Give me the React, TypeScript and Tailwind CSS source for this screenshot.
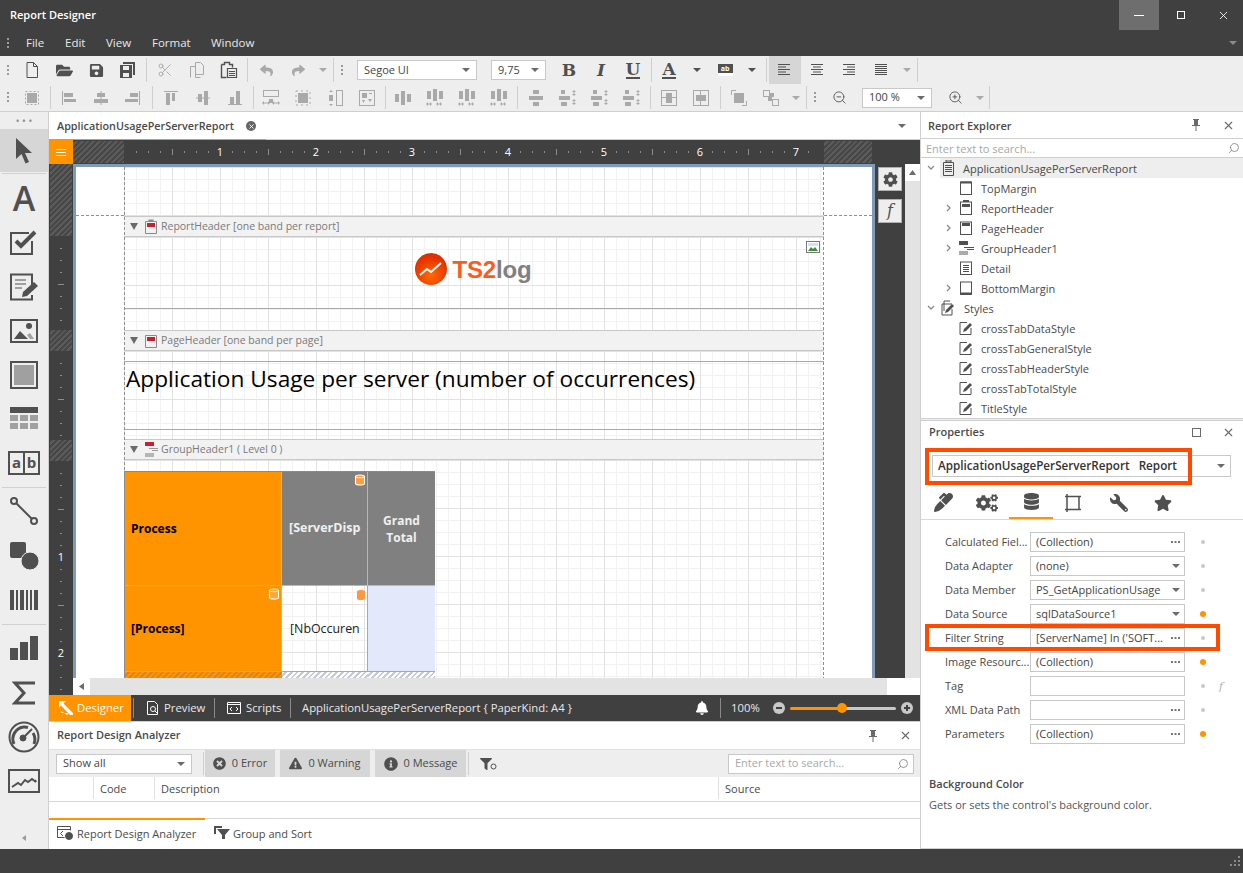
import React from "react";
import { FaFolderOpen, FaSave, FaReply, FaShare, FaBell, FaCog, FaCogs, FaDatabase, FaWrench, FaStar, FaMarker, FaTimesCircle, FaExclamationTriangle, FaInfoCircle, FaFilter } from "react-icons/fa";
import { Search, Scissors, X, ZoomIn, ZoomOut } from "lucide-react";

const Ic = ({ children, s = 20 }: any) => (
  <svg width={s} height={s} viewBox="0 0 20 20" fill="currentColor" className="shrink-0">
    {children}
  </svg>
);
const Rs = ({ r }: { r: number[][] }) => (
  <>
    {r.map((a, i) => (
      <rect key={i} x={a[0]} y={a[1]} width={a[2]} height={a[3]} />
    ))}
  </>
);
const O = ({ x, y, w, h, d }: any) => (
  <rect x={x} y={y} width={w} height={h} fill="none" stroke="currentColor" strokeWidth="1" strokeDasharray={d} />
);
const Btn = ({ children, c = "" }: any) => (
  <div className={"flex h-full w-8 shrink-0 items-center justify-center " + c}>{children}</div>
);
const Sep = ({ c = "" }: any) => (
  <div className={"flex h-full shrink-0 justify-center " + c}>
    <div className="my-[2px] w-px bg-[#cfcfcf]" />
  </div>
);
const Grip = ({ c = "" }: any) => (
  <div className={"flex shrink-0 justify-center " + c}>
    <svg width="3" height="11" fill="#9a9a9a">
      <rect y="0" width="2" height="2" />
      <rect y="4" width="2" height="2" />
      <rect y="8" width="2" height="2" />
    </svg>
  </div>
);
const Caret = ({ c = "text-[#6a6a6a]" }: any) => (
  <svg width="8" height="4" viewBox="0 0 8 4" fill="currentColor" className={"shrink-0 " + c}>
    <path d="M0 0h8L4 4z" />
  </svg>
);
const CaretBox = ({ c = "", k = "text-[#a9a9a9]" }: any) => (
  <div className={"flex h-full shrink-0 items-center justify-center " + c}>
    <Caret c={k} />
  </div>
);
const Combo = ({ text, c = "" }: any) => (
  <div className={"flex h-5 shrink-0 items-center justify-between border border-[#c8c8c8] bg-white pl-[6px] pr-[6px] text-[#444] " + c}>
    <span className="mb-[2px]">{text}</span>
    <Caret />
  </div>
);

const Doc = () => (
  <Ic>
    <path d="M5 2.5h6.5L15.5 6.5V17.5H5zM11.5 2.5V6.5H15.5" fill="none" stroke="currentColor" />
  </Ic>
);
const SaveAll = () => (
  <Ic>
    <path d="M5 2h12v13h-2V4H5z" />
    <path d="M2 5h12v13H2zM5 6v4h6V6zM5 13v4h6v-4z" fillRule="evenodd" />
  </Ic>
);
const CopyI = () => (
  <Ic>
    <path d="M8.5 2.5h5l3 3v9h-8zM3.5 6.5h5v11h5" fill="none" stroke="currentColor" />
    <path d="M3.5 6.5v11" stroke="currentColor" />
  </Ic>
);
const Paste = () => (
  <Ic>
    <path d="M2.5 4.5h3v-2h5v2h3v3M7.5 17.5h-5v-13" fill="none" stroke="currentColor" strokeWidth="1.4" />
    <path d="M8.5 8.5h9v9h-9z" fill="none" stroke="currentColor" strokeWidth="1.2" />
    <Rs r={[[10, 11, 6, 1], [10, 13, 6, 1], [10, 15, 6, 1]]} />
  </Ic>
);
const Align = ({ m }: { m: number[][] }) => (
  <Ic>
    <Rs r={m} />
  </Ic>
);
const SepIconSel = () => (
  <Ic>
    <Rs r={[[5, 5, 10, 10]]} />
    <O x={3.5} y={3.5} w={13} h={13} d="2 2" />
  </Ic>
);
const arrowsH = <path d="M1 15l2-2v1.5h4V13l2 2-2 2v-1.5H3V17zM11 15l2-2v1.5h4V13l2 2-2 2v-1.5h-4V17z" />;
const SameW = () => (
  <Ic>
    <O x={2.5} y={2.5} w={15} h={6} />
    {arrowsH}
    <Rs r={[[8, 11, 4, 4]]} />
  </Ic>
);
const SameWH = () => (
  <Ic>
    <Rs r={[[5, 5, 10, 10]]} />
    <O x={3} y={3} w={14} h={14} d="2 3" />
  </Ic>
);
const SameH = () => (
  <Ic>
    <O x={11.5} y={2.5} w={6} h={15} />
    <Rs r={[[4, 7, 4, 6]]} />
    <path d="M6 2l2 2H4zM6 18l2-2H4z" />
  </Ic>
);
const GridI = () => (
  <Ic>
    <O x={2.5} y={2.5} w={15} h={15} />
    <Rs r={[[5, 5, 5, 5], [12, 5, 3, 1]]} />
    <path d="M11 11h4l-2 3zM5 12h3l-1.5 3z" />
  </Ic>
);
const HSp = ({ v = 0 }: any) => (
  <Ic>
    <Rs r={v === 0 ? [[2, 6, 4, 8], [8, 3, 4, 14], [14, 6, 4, 8]] : [[2, 3, 4, 8], [8, 1, 4, 12], [14, 3, 4, 8]]} />
    {v ? <path d="M1 16l2-2v1.5h2V14l2 2-2 2v-1.5H3V18zM11 16l2-2v1.5h2V14l2 2-2 2v-1.5h-2V18z" /> : null}
  </Ic>
);
const VSp = ({ v = 0 }: any) => (
  <Ic>
    <Rs r={v === 0 ? [[7, 2, 6, 4], [3, 8, 14, 4], [7, 14, 6, 4]] : [[3, 2, 4, 4], [1, 8, 11, 4], [3, 14, 6, 4]]} />
    {v ? <path d="M16 2l2 2h-1.5v2H18l-2 2-2-2h1.5V4H14zM16 11l2 2h-1.5v2H18l-2 2-2-2h1.5v-2H14z" /> : null}
  </Ic>
);
const CenterBox = ({ h = 0 }: any) => (
  <Ic>
    <O x={2.5} y={2.5} w={15} h={15} />
    <Rs r={h ? [[5, 7, 10, 6], [9, 3, 1, 4], [9, 13, 1, 4]] : [[7, 5, 6, 10], [3, 9, 4, 1], [13, 9, 4, 1]]} />
  </Ic>
);
const Front = () => (
  <Ic>
    <path d="M2.5 7V2.5H7M13 17.5h4.5V13" fill="none" stroke="currentColor" />
    <Rs r={[[5, 5, 10, 10]]} />
  </Ic>
);
const Back = () => (
  <Ic>
    <O x={2.5} y={2.5} w={6} h={6} />
    <O x={11.5} y={11.5} w={6} h={6} />
    <Rs r={[[9, 5, 4, 4], [7, 9, 4, 4]]} />
  </Ic>
);

const TitleBar = () => (
  <div className="flex h-[30px] shrink-0 items-start bg-[#404040] text-white">
    <div className="flex h-full flex-1 items-center pb-[2px] pl-[10px] text-[11px] font-semibold">Report Designer</div>
    <div className="flex h-full w-10 items-center justify-center bg-[#6e6e6e]">
      <div className="h-px w-2.5 bg-white" />
    </div>
    <div className="flex h-full w-[44px] items-center justify-center">
      <div className="h-2 w-2 border border-white" />
    </div>
    <div className="flex h-full w-[40px] items-center justify-center">
      <X size={13} strokeWidth={1.6} />
    </div>
  </div>
);

const MenuBar = () => (
  <div className="flex h-[26px] shrink-0 items-center bg-[#404040] text-[11.5px] text-[#e8e8e8]">
    <Grip c="w-4" />
    <span className="ml-[10px] w-[39px]">File</span>
    <span className="w-[41px]">Edit</span>
    <span className="w-[46px]">View</span>
    <span className="w-[59px]">Format</span>
    <span>Window</span>
    <div className="flex-1" />
    <div className="pr-[6px]">
      <Caret c="text-[#8a8a8a]" />
    </div>
  </div>
);

const Toolbar1 = () => (
  <div className="flex h-7 shrink-0 items-center bg-[#eeeeee] text-[#505050]">
    <Grip c="w-4" />
    <Btn><Doc /></Btn>
    <Btn><FaFolderOpen size={17} /></Btn>
    <Btn><FaSave size={15} /></Btn>
    <Btn><SaveAll /></Btn>
    <Sep c="w-[5px]" />
    <Btn c="text-[#a9a9a9]"><Scissors size={16} strokeWidth={1.4} /></Btn>
    <Btn c="text-[#a9a9a9]"><CopyI /></Btn>
    <Btn><Paste /></Btn>
    <Sep c="w-[5px]" />
    <Btn c="text-[#a9a9a9]"><FaReply size={13} /></Btn>
    <Btn c="text-[#a9a9a9]"><FaShare size={13} /></Btn>
    <CaretBox c="w-[18px]" />
    <Sep c="w-[3px]" />
    <Grip c="w-[14px]" />
    <Combo text="Segoe UI" c="ml-[8px] w-[120px]" />
    <Combo text="9,75" c="ml-[14px] w-[55px]" />
    <Btn c="ml-[7px] text-[17px] font-bold font-['DejaVu_Serif']">B</Btn>
    <Btn c="text-[17px] font-bold italic font-['DejaVu_Serif']">I</Btn>
    <Btn c="text-[17px] font-bold font-['DejaVu_Serif']"><span className="border-b-2 border-[#505050] leading-[15px]">U</span></Btn>
    <Sep c="w-[4px]" />
    <Btn c="text-[17px] font-bold font-['DejaVu_Serif']"><span className="border-b-2 border-[#505050] leading-[15px]">A</span></Btn>
    <CaretBox c="w-6" k="text-[#505050]" />
    <Btn>
      <div className="flex w-[15px] flex-col">
        <div className="flex h-[9px] items-center justify-center bg-[#505050] text-[7px] font-bold leading-none text-white">ab</div>
        <div className="h-[3px] bg-white" />
      </div>
    </Btn>
    <CaretBox c="w-[22px]" k="text-[#505050]" />
    <Sep c="w-[6px]" />
    <Btn c="bg-[#d6d6d6]"><Align m={[[3, 4, 12, 1], [3, 6.5, 8, 1], [3, 9, 12, 1], [3, 11.5, 8, 1], [3, 14, 12, 1]]} /></Btn>
    <Btn><Align m={[[4, 4, 12, 1], [6, 6.5, 8, 1], [4, 9, 12, 1], [6, 11.5, 8, 1], [4, 14, 12, 1]]} /></Btn>
    <Btn><Align m={[[4, 4, 12, 1], [8, 6.5, 8, 1], [4, 9, 12, 1], [8, 11.5, 8, 1], [4, 14, 12, 1]]} /></Btn>
    <Btn><Align m={[[4, 4, 12, 1], [4, 6, 12, 1], [4, 8, 12, 1], [4, 10, 12, 1], [4, 12, 12, 1], [4, 14, 12, 1]]} /></Btn>
    <CaretBox c="w-5" />
    <Sep c="w-px" />
  </div>
);

const Toolbar2 = () => (
  <div className="flex h-7 shrink-0 items-center border-b border-[#cfcfcf] bg-[#eeeeee] text-[#a9a9a9]">
    <Grip c="w-4" />
    <Btn><SepIconSel /></Btn>
    <Sep c="w-[5px]" />
    <Btn><Align m={[[3, 3, 1, 14], [5, 5, 9, 4], [5, 11, 12, 3]]} /></Btn>
    <Btn><Align m={[[9.5, 3, 1, 14], [6, 5, 8, 4], [3, 11, 14, 4]]} /></Btn>
    <Btn><Align m={[[16, 3, 1, 14], [7, 5, 8, 4], [2, 11, 13, 3]]} /></Btn>
    <Sep c="w-[6px]" />
    <Btn><Align m={[[3, 3, 14, 1], [5, 5, 4, 12], [11, 5, 3, 8]]} /></Btn>
    <Btn><Align m={[[3, 9.5, 14, 1], [5, 6, 4, 8], [11, 3, 4, 14]]} /></Btn>
    <Btn><Align m={[[3, 16, 14, 1], [5, 9, 4, 7], [11, 3, 4, 13]]} /></Btn>
    <Sep c="w-[4px]" />
    <Btn><SameW /></Btn>
    <Btn><SameWH /></Btn>
    <Btn><SameH /></Btn>
    <Btn><GridI /></Btn>
    <Sep c="w-[4px]" />
    <Btn><HSp /></Btn>
    <Btn><HSp v={1} /></Btn>
    <Btn><HSp v={1} /></Btn>
    <Btn><HSp v={1} /></Btn>
    <Sep c="w-[5px]" />
    <Btn><VSp /></Btn>
    <Btn><VSp v={1} /></Btn>
    <Btn><VSp v={1} /></Btn>
    <Btn><VSp v={1} /></Btn>
    <Sep c="w-[5px]" />
    <Btn><CenterBox /></Btn>
    <Btn><CenterBox h={1} /></Btn>
    <Sep c="w-[6px]" />
    <Btn><Front /></Btn>
    <Btn><Back /></Btn>
    <CaretBox c="w-[18px]" />
    <Sep c="w-[2px]" />
    <Grip c="w-4" />
    <Btn c="text-[#505050]"><ZoomOut size={15} strokeWidth={1.4} /></Btn>
    <Combo text="100 %" c="ml-[7px] w-[70px]" />
    <Btn c="ml-[7px] text-[#505050]"><ZoomIn size={15} strokeWidth={1.4} /></Btn>
    <CaretBox c="w-[18px]" />
    <Sep c="w-px" />
  </div>
);

const ticks = (start: number, n: number, vert: boolean) => {
  const out: React.ReactNode[] = [];
  for (let i = 1; i < n; i++) {
    const p = start + i * 12;
    if (i % 8 === 0) continue;
    const major = i % 4 === 0;
    out.push(
      vert ? (
        <rect key={p} x={major ? 9 : 11} y={p} width={major ? 6 : 2} height="1" fill="#8d8d8d" />
      ) : (
        <rect key={p} x={p} y={major ? 9 : 11} width="1" height={major ? 6 : 2} fill="#8d8d8d" />
      )
    );
  }
  return out;
};

const HATCH = "bg-[repeating-linear-gradient(135deg,#474747_0,#474747_2px,#5b5b5b_2px,#5b5b5b_4px)]";

const HRuler = () => (
  <div className="flex h-6 shrink-0 bg-[#404040]">
    <div className="flex w-6 shrink-0 flex-col items-center justify-center gap-[2px] bg-[#ff9300]">
      <div className="h-px w-2.5 bg-white" />
      <div className="h-px w-2.5 bg-white" />
      <div className="h-px w-2.5 bg-white" />
    </div>
    <div className={"my-px w-[51px] shrink-0 " + HATCH} />
    <svg width="700" height="24" className="shrink-0">
      {ticks(0, 58, false)}
      {[1, 2, 3, 4, 5, 6, 7].map((n) => (
        <text key={n} x={n * 96} y="16" textAnchor="middle" fill="#fff" fontSize="11" fontFamily="Open Sans">
          {n}
        </text>
      ))}
    </svg>
    <div className={"my-px w-[48px] shrink-0 " + HATCH} />
  </div>
);

const VRuler = () => (
  <div className="flex w-6 shrink-0 flex-col bg-[#404040]">
    <div className={"mx-px h-[72px] shrink-0 " + HATCH} />
    <svg width="24" height="94" className="shrink-0">{ticks(0, 8, true)}</svg>
    <div className={"mx-px h-[21px] shrink-0 " + HATCH} />
    <svg width="24" height="89" className="shrink-0">{ticks(0, 8, true)}</svg>
    <div className={"mx-px h-[21px] shrink-0 " + HATCH} />
    <svg width="24" height="234" className="shrink-0">
      {ticks(0, 20, true)}
      <text x="12" y="100" textAnchor="middle" fill="#fff" fontSize="11" fontFamily="Open Sans">1</text>
      <text x="12" y="196" textAnchor="middle" fill="#fff" fontSize="11" fontFamily="Open Sans">2</text>
    </svg>
  </div>
);

const GRID =
  "bg-white bg-[linear-gradient(to_right,#e2e2e2_1px,transparent_1px),linear-gradient(to_bottom,#e2e2e2_1px,transparent_1px),linear-gradient(to_right,#f2f2f2_1px,transparent_1px),linear-gradient(to_bottom,#f2f2f2_1px,transparent_1px)] bg-[size:48px_48px,48px_48px,12px_12px,12px_12px]";

const Tri = () => (
  <svg width="8" height="7" viewBox="0 0 8 7" fill="#6a6a6a" className="shrink-0">
    <path d="M0 0h8L4 7z" />
  </svg>
);
const BandIcon = ({ clip }: any) => (
  <svg width="12" height="16" viewBox="0 0 12 16" className="mr-[3px] shrink-0">
    <path d="M.5 2.500h11v12H.5z" fill="none" stroke="#8a8a8a" />
    <rect x="2" y="4" width="8" height="4" fill="#c8202c" />
    {clip ? <rect x="3.500" y="0.500" width="5" height="2" fill="#8a8a8a" /> : null}
  </svg>
);
const BandHead = ({ icon, text }: any) => (
  <div className="flex h-[21px] shrink-0 items-center border-y border-[#c8c8c8] bg-[#f2f2f2] pl-[6px] text-[10.5px] text-[#7a7a7a]">
    <Tri />
    <div className="ml-[6px] flex w-[17px] justify-center">{icon}</div>
    <span>{text}</span>
  </div>
);
const Db = ({ c }: any) => (
  <svg width="12" height="12" viewBox="0 0 12 12" className="absolute right-[1px] top-[2px]">
    <path d="M1.5 2.5c0-2 9-2 9 0v7c0 2-9 2-9 0z" fill={c} stroke="#fff" strokeWidth="1.1" />
    <path d="M1.5 2.5c0 1.6 9 1.6 9 0" fill="none" stroke="#fff" strokeWidth="1" />
  </svg>
);

const Logo = () => (
  <div className="flex items-center">
    <div className="flex h-8 w-8 items-center justify-center rounded-full bg-[radial-gradient(circle_at_50%_70%,#ff6a00,#e63200_65%,#c92a00)]">
      <svg width="26" height="18" viewBox="0 0 26 18">
        <path d="M2 15l7-6 4 3 10-9" fill="none" stroke="#fff" strokeWidth="2" strokeLinejoin="round" />
      </svg>
    </div>
    <span className="ml-[6px] mt-[3px] font-['Liberation_Sans'] text-[24px] font-bold leading-none tracking-[-0.2px] text-[#ff5a1e]">
      TS2<span className="text-[#808080]">log</span>
    </span>
  </div>
);

const Canvas = () => (
  <div className="relative flex-1 overflow-hidden border-x-[3px] border-t-[3px] border-[#7f9abb] bg-white">
    <div className="absolute left-0 right-0 top-[48px] border-t border-dashed border-[#8f8f8f]" />
    <div className="relative ml-[48px] w-[700px]">
      <div className={"h-[49px] " + GRID} />
      <BandHead icon={<BandIcon clip />} text="ReportHeader [one band per report]" />
      <div className={"h-[93px] " + GRID}>
        <div className="relative flex h-[72px] items-center justify-center border-b border-[#a8a8a8] pb-[8px] pr-[2px]">
          <Logo />
          <svg width="14" height="12" viewBox="0 0 14 12" className="absolute right-[4px] top-[4px]">
            <rect x="0.5" y="0.5" width="13" height="11" fill="#fff" stroke="#777" />
            <path d="M2 10l3-4 2 2 2-2 3 4z" fill="#3d8f3d" />
            <rect x="2" y="2" width="10" height="3" fill="#cfe3f5" />
          </svg>
        </div>
      </div>
      <BandHead icon={<BandIcon />} text="PageHeader [one band per page]" />
      <div className={"h-[88px] pt-[10px] " + GRID}>
        <div className="flex h-[69px] items-start border-y border-[#a8a8a8] pl-[2px] pt-[2px] text-[22.7px] leading-[30px] text-black">
          Application Usage per server (number of occurrences)
        </div>
      </div>
      <BandHead
        icon={
          <svg width="13" height="18" viewBox="0 0 13 18" fill="#9a9a9a" className="mr-[3px]">
            <rect x="0" y="1" width="9" height="4" fill="#c8202c" />
            <rect x="0" y="12" width="9" height="4" fill="#b5b5b5" />
            <Rs r={[[4, 7, 9, 1], [7, 9, 6, 1]]} />
          </svg>
        }
        text="GroupHeader1 ( Level 0 )"
      />
      <div className={"h-[300px] pt-[11px] " + GRID}>
        <div className="grid w-[311px] grid-cols-[157px_86px_67px] grid-rows-[114px_86px_7px] border-t border-l border-[#8a8a8a] text-[12px] font-bold">
          <div className="flex items-center border-b border-r border-[#b8b8b8] bg-[#ff9300] pl-[6px] text-black">Process</div>
          <div className="relative flex items-center border-b border-r border-[#b8b8b8] bg-[#808080] pl-[7px] text-[12.5px] text-[#f0f0f0]">
            [ServerDisp
            <Db c="#ff9f40" />
          </div>
          <div className="flex items-center justify-center border-b border-[#b8b8b8] bg-[#808080] text-center text-[#f0f0f0] leading-[17px]">
            Grand
            <br />
            Total
          </div>
          <div className="relative flex items-center border-b border-r border-[#b8b8b8] bg-[#ff9300] pl-[6px] text-black">
            [Process]
            <Db c="#ffa833" />
          </div>
          <div className="relative flex items-center border-b border-r border-[#a8a8a8] pl-[8px] pt-[2px] text-[12.4px] font-normal text-[#222]">
            [NbOccuren
            <svg width="10" height="12" viewBox="0 0 10 12" className="absolute right-[1px] top-[3px]">
              <path d="M1 2.5c0-2 8-2 8 0v7c0 2-8 2-8 0z" fill="#ff9640" />
            </svg>
          </div>
          <div className="border-b border-[#a8a8a8] bg-[#e3e9fb]" />
          <div className="bg-[repeating-linear-gradient(135deg,#ff9300_0,#ff9300_2px,#d9861e_2px,#d9861e_4px)]" />
          <div className="bg-[repeating-linear-gradient(135deg,#fff_0,#fff_2px,#c4cadb_2px,#c4cadb_4px)]" />
          <div className="bg-[repeating-linear-gradient(135deg,#fff_0,#fff_2px,#c4cadb_2px,#c4cadb_4px)]" />
        </div>
      </div>
      <div className="pointer-events-none absolute inset-0 border-x border-dashed border-[#8f8f8f]" />
    </div>
  </div>
);

const SquareBtn = ({ children }: any) => (
  <div className="flex h-6 w-6 items-center justify-center border border-[#b0b0b0] bg-[#eeeeee] text-[#505050]">{children}</div>
);

const DesignArea = () => (
  <div className="flex min-h-0 flex-1">
    <VRuler />
    <div className="flex min-w-0 flex-1 flex-col">
      <div className="flex min-h-0 flex-1">
        <Canvas />
        <div className="flex w-[30px] shrink-0 flex-col items-center gap-[8px] bg-[#404040] pt-[3px]">
          <SquareBtn><FaCog size={15} /></SquareBtn>
          <SquareBtn><span className="font-['DejaVu_Serif'] text-[16px] italic">f</span></SquareBtn>
        </div>
        <div className="flex w-[15px] shrink-0 flex-col bg-[#e3e3e3]">
          <div className="flex h-[17px] items-center justify-center bg-white">
            <svg width="7" height="5" fill="#6a6a6a"><path d="M3.5 0L7 5H0z" /></svg>
          </div>
        </div>
      </div>
      <div className="flex h-[17px] shrink-0 bg-[#e3e3e3]">
        <div className="flex w-[17px] items-center justify-center bg-white">
          <svg width="5" height="7" fill="#6a6a6a"><path d="M5 0v7L0 3.500z" /></svg>
        </div>
        <div className="flex-1" />
        <div className="w-[33px] bg-white" />
      </div>
    </div>
  </div>
);

const StatusTabs = () => (
  <div className="flex h-[26px] shrink-0 items-center bg-[#404040] pr-[2px] text-[11.3px] text-[#e8e8e8]">
    <div className="flex h-full w-[82px] items-center bg-[#ff9300] pl-[10px] text-white">
      <svg width="14" height="14" viewBox="0 0 14 14" fill="#fff" className="mr-[4px] shrink-0">
        <path d="M0 0h7L4.500 2.500 14 12v2h-3L2 4.500 0 7zM8 14l2-2H2v-2z" />
      </svg>
      Designer
    </div>
    <div className="ml-[2px] h-5 w-px bg-[#8a8a8a]" />
    <svg width="16" height="16" viewBox="0 0 16 16" fill="none" stroke="#fff" className="ml-[11px] shrink-0">
      <path d="M2.5 1.500h7l3 3v10h-10z" />
      <circle cx="8" cy="9" r="2.500" />
      <path d="M10 11l2.500 2.500" />
    </svg>
    <span className="ml-[3px] w-[50px]">Preview</span>
    <div className="h-5 w-px bg-[#8a8a8a]" />
    <svg width="16" height="16" viewBox="0 0 16 16" fill="none" stroke="#fff" className="ml-[11px] shrink-0">
      <path d="M1.500 2.500h13v11h-13zM1.500 4.500h13" />
      <path d="M6 7L4 9l2 2M10 7l2 2-2 2" />
    </svg>
    <span className="ml-[4px] w-[44px]">Scripts</span>
    <div className="h-5 w-px bg-[#8a8a8a]" />
    <span className="ml-[11px]">ApplicationUsagePerServerReport {"{"} PaperKind: A4 {"}"}</span>
    <div className="flex-1" />
    <FaBell size={14} className="text-white" />
    <div className="ml-[11px] h-5 w-px bg-[#8a8a8a]" />
    <span className="ml-[10px] w-[28px]">100%</span>
    <svg width="12" height="12" viewBox="0 0 12 12" className="ml-[14px] shrink-0">
      <circle cx="6" cy="6" r="6" fill="#c8c8c8" />
      <rect x="3" y="5" width="6" height="2" fill="#404040" />
    </svg>
    <div className="relative ml-[5px] flex h-[10px] w-[106px] items-center">
      <div className="h-[3px] w-[52px] rounded-l bg-[#ff9300]" />
      <div className="h-[3px] flex-1 rounded-r bg-[#c8c8c8]" />
      <div className="absolute left-[47px] top-0 h-[10px] w-[10px] rounded-full bg-[#ff9300]" />
    </div>
    <svg width="12" height="12" viewBox="0 0 12 12" className="ml-[5px] mr-[5px] shrink-0">
      <circle cx="6" cy="6" r="6" fill="#c8c8c8" />
      <path d="M3 5h2V3h2v2h2v2H7v2H5V7H3z" fill="#404040" />
    </svg>
  </div>
);

const SearchBox = ({ c = "", up = "" }: any) => (
  <div className={"flex items-center justify-between text-[#a8a8a8] " + c}>
    <span className={up}>Enter text to search...</span>
    <Search size={12} strokeWidth={1.5} className="-scale-x-100 text-[#777]" />
  </div>
);

const PinIc = () => (
  <svg width="10" height="12" viewBox="0 0 10 12" fill="#6a6a6a" className="shrink-0">
    <path d="M2 0h6v1H7v5h2v1H5.500v5h-1V7H1V6h2V1H2z" />
  </svg>
);

const Analyzer = () => (
  <div className="flex h-[128px] shrink-0 flex-col border-t border-[#cfcfcf] bg-white">
    <div className="flex h-[27px] shrink-0 items-center pl-2 pr-[8px] font-semibold text-[#4a4a4a]">
      <span className="mb-[2px] flex-1">Report Design Analyzer</span>
      <div className="mr-[21px]"><PinIc /></div>
      <X size={13} className="text-[#6a6a6a]" />
    </div>
    <div className="flex h-7 shrink-0 items-center border-t border-[#e0e0e0] bg-[#eeeeee] pl-[7px] text-[#4a4a4a]">
      <Combo text="Show all" c="w-[136px]" />
      <Sep c="ml-[10px] w-[3px]" />
      <div className="flex h-full w-[70px] items-center justify-center gap-[6px] bg-[#d6d6d6]">
        <FaTimesCircle size={13} className="text-[#505050]" />
        <span className="mb-[2px]">0 Error</span>
      </div>
      <div className="ml-[5px] flex h-full w-[90px] items-center justify-center gap-[6px] bg-[#d6d6d6]">
        <FaExclamationTriangle size={13} className="text-[#505050]" />
        <span className="mb-[2px]">0 Warning</span>
      </div>
      <div className="ml-[5px] flex h-full w-[91px] items-center justify-center gap-[6px] bg-[#d6d6d6]">
        <FaInfoCircle size={14} className="text-[#505050]" />
        <span className="mb-[2px]">0 Message</span>
      </div>
      <Sep c="w-[4px]" />
      <div className="ml-[10px] flex items-center text-[#505050]">
        <FaFilter size={12} />
        <svg width="7" height="7" viewBox="0 0 7 7" fill="none" stroke="#505050" className="-ml-[2px] mt-[6px]">
          <circle cx="3.5" cy="3.5" r="2.5" />
        </svg>
      </div>
      <div className="flex-1" />
      <SearchBox up="mb-[2px]" c="mr-[6px] h-5 w-[186px] border border-[#c8c8c8] bg-white pl-[6px] pr-[4px]" />
    </div>
    <div className="flex h-[25px] shrink-0 border-b border-[#d8d8d8] pb-[2px] text-[#4a4a4a]">
      <div className="w-[45px] border-r border-[#e0e0e0]" />
      <div className="flex w-[61px] items-center border-r border-[#e0e0e0] pl-[6px]">Code</div>
      <div className="flex w-[564px] items-center border-r border-[#e0e0e0] pl-[6px]">Description</div>
      <div className="flex items-center pl-[6px]">Source</div>
    </div>
    <div className="h-[17px] shrink-0 border-b border-[#d8d8d8]" />
    <div className="relative flex h-[30px] shrink-0 items-center pb-[2px] text-[#4a4a4a]">
      <div className="absolute left-0 top-[-1px] h-[1.5px] w-[156px] bg-[#ff9300]" />
      <div className="flex w-[156px] shrink-0 items-center pl-[8px]">
        <svg width="16" height="14" viewBox="0 0 16 14" fill="none" stroke="#505050" className="shrink-0">
          <path d="M.5.5h13v4M.5.5v11h7M.5 3.5h13" />
          <path d="M6 5L3.5 7.5 6 10" />
          <circle cx="12" cy="10" r="3.5" fill="#505050" />
        </svg>
        <span className="ml-[4px]">Report Design Analyzer</span>
      </div>
      <svg width="17" height="14" viewBox="0 0 17 14" fill="#505050" className="ml-[9px] shrink-0">
        <path d="M0 0h8v2H2v6H0zM3 3h13l-5 6v4H8V9z" />
      </svg>
      <span className="ml-[2px]">Group and Sort</span>
    </div>
  </div>
);

const Center = () => (
  <div className="flex min-w-0 flex-1 flex-col">
    <div className="relative flex h-[28px] shrink-0 items-center border-b border-[#cfcfcf] bg-white pl-2 text-[#4a4a4a]">
      <span className="mt-[2px] text-[10.8px] font-semibold">ApplicationUsagePerServerReport</span>
      <div className="ml-[12px] mt-[1px] flex h-[10px] w-[10px] items-center justify-center rounded-full bg-[#666] text-white">
        <X size={7} strokeWidth={3} />
      </div>
      <div className="flex-1" />
      <div className="pr-[14px]"><Caret /></div>
      <div className="absolute -bottom-px left-0 h-px w-[217px] bg-[#ff9300]" />
    </div>
    <HRuler />
    <DesignArea />
    <StatusTabs />
    <Analyzer />
  </div>
);

const T = ({ children, c = "" }: any) => <div className={"flex shrink-0 items-center justify-center " + c}>{children}</div>;

const Toolbox = () => (
  <div className="flex w-[49px] shrink-0 flex-col border-r border-[#cfcfcf] bg-[#eeeeee] text-[#505050]">
    <div className="flex h-[17px] shrink-0 items-center justify-center text-[10px] leading-none text-[#8a8a8a]">• • •</div>
    <T c="h-[43px] bg-[#d6d6d6]">
      <svg width="20" height="28" viewBox="0 0 20 28" fill="#505050">
        <path d="M2 1l16 15h-7l4 9-3.500 1.500-4-9.500L2 22z" />
      </svg>
    </T>
    <div className="mx-[2px] my-px h-px shrink-0 bg-[#d0d0d0]" />
    <T c="h-[46px] font-['Open_Sans'] text-[34px] font-semibold leading-none">A</T>
    <T c="h-[44px]">
      <svg width="30" height="26" viewBox="0 0 30 26" fill="none" stroke="#505050">
        <path d="M23 11v13H2V3h18" strokeWidth="2" />
        <path d="M7 11l5 5L26 2" strokeWidth="4" />
      </svg>
    </T>
    <T c="h-[44px]">
      <svg width="30" height="28" viewBox="0 0 30 28" fill="none" stroke="#505050">
        <path d="M23 12V1.500H2v25h21V22" strokeWidth="2" />
        <path d="M6 7h11M6 11h11M6 15h7" stroke="#a0a0a0" strokeWidth="2" />
        <path d="M13 24l1-5 11-10 4 4-11 10z" fill="#505050" stroke="none" />
      </svg>
    </T>
    <T c="h-[44px]">
      <svg width="28" height="24" viewBox="0 0 28 24">
        <rect x="1" y="1" width="26" height="22" fill="none" stroke="#505050" strokeWidth="2" />
        <circle cx="19" cy="7" r="3" fill="#505050" />
        <path d="M4 20l6-8 8 8z" fill="#505050" />
        <path d="M17 16l3-2 4 6h-4z" fill="#a0a0a0" />
      </svg>
    </T>
    <T c="h-[44px]">
      <div className="flex h-7 w-7 items-center justify-center border-2 border-[#505050]">
        <div className="h-5 w-5 bg-[#a0a0a0]" />
      </div>
    </T>
    <T c="h-[44px]">
      <svg width="28" height="24" viewBox="0 0 28 24" fill="#a0a0a0">
        <rect width="28" height="6" fill="#505050" />
        <Rs r={[[0, 8, 8, 6], [10, 8, 8, 6], [20, 8, 8, 6], [0, 16, 8, 6], [10, 16, 8, 6], [20, 16, 8, 6]]} />
      </svg>
    </T>
    <T c="h-[44px]">
      <div className="flex h-6 w-8 items-stretch border-2 border-[#505050] font-['Open_Sans'] text-[15px] font-bold leading-[18px]">
        <span className="flex-1 border-r-2 border-[#505050] text-center">a</span>
        <span className="flex-1 text-center">b</span>
      </div>
    </T>
    <div className="mx-[2px] mt-[2px] h-px shrink-0 bg-[#d0d0d0]" />
    <T c="h-[46px]">
      <svg width="30" height="30" viewBox="0 0 30 30" fill="none" stroke="#505050" strokeWidth="2">
        <circle cx="5" cy="5" r="3" />
        <circle cx="25" cy="25" r="3" />
        <path d="M7 7l16 16" />
      </svg>
    </T>
    <T c="h-[44px]">
      <svg width="30" height="30" viewBox="0 0 30 30" fill="#505050">
        <rect x="1" y="1" width="16" height="16" rx="2" />
        <circle cx="21" cy="20" r="9" stroke="#eeeeee" strokeWidth="1" />
      </svg>
    </T>
    <T c="h-[44px]">
      <svg width="28" height="20" viewBox="0 0 28 20" fill="#505050">
        <Rs r={[[0, 0, 4, 20], [6, 0, 2, 20], [10, 0, 4, 20], [16, 0, 2, 20], [20, 0, 2, 20], [24, 0, 4, 20]]} />
      </svg>
    </T>
    <div className="mx-[2px] mt-[2px] h-px shrink-0 bg-[#d0d0d0]" />
    <T c="h-[46px]">
      <svg width="28" height="24" viewBox="0 0 28 24" fill="#505050">
        <Rs r={[[0, 12, 8, 12], [10, 6, 8, 18], [20, 0, 8, 24]]} />
      </svg>
    </T>
    <T c="h-[44px]">
      <svg width="24" height="24" viewBox="0 0 24 24" fill="none" stroke="#505050" strokeWidth="3">
        <path d="M23 2H3l9 10-9 10h20" />
      </svg>
    </T>
    <T c="h-[44px]">
      <svg width="32" height="32" viewBox="0 0 32 32" fill="none" stroke="#505050">
        <circle cx="16" cy="16" r="14.500" strokeWidth="2" />
        <path d="M6 23A12 12 0 0 1 16 6a12 12 0 0 1 4 .5" strokeWidth="3" />
        <path d="M25 12a12 12 0 0 1 1 11" strokeWidth="3" />
        <circle cx="15" cy="17" r="3" fill="#505050" />
        <path d="M15 17L24 8" strokeWidth="2" />
      </svg>
    </T>
    <T c="h-[44px]">
      <svg width="32" height="24" viewBox="0 0 32 24" fill="none" stroke="#505050">
        <rect x="1" y="1" width="30" height="22" strokeWidth="2" />
        <path d="M4 18l6-4 3 2 4-5 3 2 4-3 4 3-1-2" strokeWidth="2" />
      </svg>
    </T>
    <div className="flex flex-1 items-end justify-center pb-[8px]">
      <svg width="4" height="6" fill="#9a9a9a"><path d="M4 0v6L0 3z" /></svg>
    </div>
  </div>
);

const Chev = ({ d }: any) =>
  d ? (
    <svg width="8" height="6" viewBox="0 0 8 6" fill="none" stroke="#8a8a8a" strokeWidth="1.3" className="shrink-0">
      <path d="M1 1l3 3 3-3" />
    </svg>
  ) : (
    <svg width="6" height="8" viewBox="0 0 6 8" fill="none" stroke="#8a8a8a" strokeWidth="1.3" className="shrink-0">
      <path d="M1 1l3 3-3 3" />
    </svg>
  );

const TreeBand = ({ kind }: any) => (
  <svg width="14" height="16" viewBox="0 0 14 16" fill="#505050" className="shrink-0">
    <rect x="1.500" y="2" width="11" height="12.500" fill="none" stroke="#505050" />
    {kind === "top" ? <rect x="1.500" y="1.500" width="11" height="2" /> : null}
    {kind === "rh" ? <><rect x="4" y="0" width="6" height="2" /><rect x="3" y="4" width="8" height="3" /></> : null}
    {kind === "ph" ? <rect x="3" y="3" width="8" height="3" /> : null}
    {kind === "d" ? <Rs r={[[4, 5, 6, 1], [4, 7, 6, 1], [4, 9, 6, 1], [4, 11, 6, 1]]} /> : null}
    {kind === "bm" ? <rect x="1.500" y="12.500" width="11" height="2" /> : null}
  </svg>
);
const GroupI = () => (
  <svg width="15" height="16" viewBox="0 0 15 16" fill="#505050" className="shrink-0">
    <rect x="0" y="1" width="9" height="4" />
    <Rs r={[[5, 7, 10, 1], [8, 9, 7, 1]]} />
    <rect x="0" y="11" width="9" height="4" fill="#aaaaaa" />
  </svg>
);
const StyleI = () => (
  <svg width="14" height="14" viewBox="0 0 14 14" className="shrink-0">
    <path d="M8 1.500H1v12h11V7" fill="none" stroke="#505050" />
    <path d="M4 11l1-3 6-6 2 2-6 6z" fill="#505050" />
  </svg>
);

const Row = ({ chev, icon, text }: any) => (
  <div className="flex h-5 shrink-0 items-center pl-[21px] text-[#4a4a4a]">
    <div className="flex w-[14px] justify-center">{chev ? <Chev /> : null}</div>
    <div className="flex w-5 justify-center">{icon}</div>
    <span className="ml-[5px]">{text}</span>
  </div>
);

const Explorer = () => (
  <div className="flex h-[306px] shrink-0 flex-col overflow-hidden bg-white">
    <div className="flex h-[27px] shrink-0 items-center border-b border-[#cfcfcf] pl-[7px] pr-[8px] font-semibold text-[#4a4a4a]">
      <span className="flex-1">Report Explorer</span>
      <div className="mr-[21px]"><PinIc /></div>
      <X size={13} className="text-[#6a6a6a]" />
    </div>
    <SearchBox c="h-[19px] shrink-0 border-b border-[#cfcfcf] pl-[5px] pr-[3px]" />
    <div className="flex h-5 shrink-0 items-center text-[#4a4a4a]">
      <div className="flex w-[19px] justify-center"><Chev d /></div>
      <div className="flex h-full flex-1 items-center bg-[#eeeeee]">
        <div className="flex w-4 justify-center">
          <svg width="13" height="16" viewBox="0 0 13 16" fill="#505050">
            <path d="M4 0h5v2H4zM1.500 2.500h10v13h-10z" fill="none" stroke="#505050" />
            <Rs r={[[3, 5, 7, 1], [3, 7, 7, 1], [3, 9, 7, 1], [3, 11, 7, 1]]} />
          </svg>
        </div>
        <span className="ml-[7px]">ApplicationUsagePerServerReport</span>
      </div>
    </div>
    <Row icon={<TreeBand kind="top" />} text="TopMargin" />
    <Row chev icon={<TreeBand kind="rh" />} text="ReportHeader" />
    <Row chev icon={<TreeBand kind="ph" />} text="PageHeader" />
    <Row chev icon={<GroupI />} text="GroupHeader1" />
    <Row icon={<TreeBand kind="d" />} text="Detail" />
    <Row chev icon={<TreeBand kind="bm" />} text="BottomMargin" />
    <div className="flex h-5 shrink-0 items-center text-[#4a4a4a]">
      <div className="flex w-[19px] justify-center"><Chev d /></div>
      <svg width="16" height="16" viewBox="0 0 16 16" className="shrink-0">
        <path d="M10 1H4v10M12 4H2v11h10V9" fill="none" stroke="#505050" />
        <path d="M5 13l1-3 6-6 2 2-6 6z" fill="#505050" />
      </svg>
      <span className="ml-[8px]">Styles</span>
    </div>
    <Row icon={<StyleI />} text="crossTabDataStyle" />
    <Row icon={<StyleI />} text="crossTabGeneralStyle" />
    <Row icon={<StyleI />} text="crossTabHeaderStyle" />
    <Row icon={<StyleI />} text="crossTabTotalStyle" />
    <Row icon={<StyleI />} text="TitleStyle" />
  </div>
);

const Dots = () => (
  <svg width="9" height="2" fill="#777" className="shrink-0">
    <Rs r={[[0, 0, 2, 2], [3.5, 0, 2, 2], [7, 0, 2, 2]]} />
  </svg>
);

const Prop = ({ label, value, tail, on, f }: any) => (
  <div className="flex h-5 shrink-0 items-center pl-[24px]">
    <div className="mb-[2px] w-[85px] whitespace-nowrap text-[#4a4a4a]">{label}</div>
    <div className="flex h-5 w-[155px] items-center justify-between border border-[#c8c8c8] bg-white pl-[5px] pr-[4px] text-[#444]">
      <span className="mb-[2px] whitespace-nowrap">{value}</span>
      {tail === "d" ? <Dots /> : tail === "c" ? <Caret /> : null}
    </div>
    <div className="flex w-9 justify-center">
      <div className={on ? "h-[6px] w-[6px] rounded-full bg-[#ff9300]" : "h-[4px] w-[4px] rounded-full bg-[#c8c8c8]"} />
    </div>
    {f ? <span className="-ml-[2px] font-['DejaVu_Serif'] italic text-[#b0b0b0]">f</span> : null}
  </div>
);

const Properties = () => (
  <div className="relative flex min-h-0 flex-1 flex-col bg-white text-[#4a4a4a]">
    <div className="flex h-[22px] shrink-0 items-center pl-[8px] pr-[8px] font-semibold">
      <span className="mb-[2px] flex-1">Properties</span>
      <div className="mr-[21px] h-[9px] w-[9px] border border-[#6a6a6a]" />
      <X size={13} className="text-[#6a6a6a]" />
    </div>
    <div className="ml-[11px] mt-[12px] flex h-[22px] w-[299px] shrink-0 items-center justify-between border border-[#c8c8c8] pl-[5px] pr-[5px]">
      <span className="flex gap-[9px] text-[11.7px] font-semibold text-[#333]">
        <span>ApplicationUsagePerServerReport</span>
        <span>Report</span>
      </span>
      <Caret />
    </div>
    <div className="flex h-[43px] shrink-0 items-end border-b border-[#d8d8d8] text-[#505050]">
      <div className="flex h-full w-[44px] items-center justify-center pt-[9px]"><FaMarker size={19} /></div>
      <div className="flex h-full w-[44px] items-center justify-center pt-[9px]"><FaCogs size={22} /></div>
      <div className="flex h-full w-[44px] items-center justify-center border-b-2 border-[#ff9300] pt-[9px]"><FaDatabase size={17} /></div>
      <div className="flex h-full w-[40px] items-center justify-center pt-[9px]">
        <svg width="18" height="20" viewBox="0 0 18 20" fill="none" stroke="#505050" strokeWidth="1.500">
          <path d="M1 3.500h16M1 16.500h16M3 1v18M15 3.500v13" />
        </svg>
      </div>
      <div className="flex h-full w-[52px] items-center justify-center pt-[9px]"><FaWrench size={18} className="-scale-x-100" /></div>
      <div className="flex h-full w-[36px] items-center justify-center pt-[9px]"><FaStar size={18} /></div>
    </div>
    <div className="flex flex-col gap-1 pt-[12px]">
      <Prop label="Calculated Fiel..." value="(Collection)" tail="d" />
      <Prop label="Data Adapter" value="(none)" tail="c" />
      <Prop label="Data Member" value="PS_GetApplicationUsage" tail="c" />
      <Prop label="Data Source" value="sqlDataSource1" tail="c" on />
      <Prop label="Filter String" value="[ServerName] In ('SOFT..." tail="d" />
      <Prop label="Image Resourc..." value="(Collection)" tail="d" on />
      <Prop label="Tag" value="" f />
      <Prop label="XML Data Path" value="" tail="d" />
      <Prop label="Parameters" value="(Collection)" tail="d" on />
    </div>
    <div className="mt-[34px] px-[8px]">
      <div className="font-semibold">Background Color</div>
      <div className="mt-[10px] text-[#555]">Gets or sets the control's background color.</div>
    </div>
    <div className="pointer-events-none absolute left-[4px] top-[27px] h-[37px] w-[267px] border-4 border-[#ff4a00]" />
    <div className="pointer-events-none absolute left-[4px] top-[203px] h-[27px] w-[295px] border-4 border-[#ff4a00]" />
  </div>
);

const RightPanel = () => (
  <div className="flex w-[323px] shrink-0 flex-col border-b border-l border-[#cfcfcf] bg-white">
    <Explorer />
    <div className="h-[3px] shrink-0 border-y border-[#cfcfcf] bg-[#eeeeee]" />
    <Properties />
  </div>
);

export default function App() {
  return (
    <div className="flex h-[873px] w-[1243px] flex-col overflow-hidden bg-[#404040] font-['Open_Sans',sans-serif] text-[11px] leading-none">
      <TitleBar />
      <MenuBar />
      <Toolbar1 />
      <Toolbar2 />
      <div className="flex min-h-0 flex-1 bg-white">
        <Toolbox />
        <Center />
        <RightPanel />
      </div>
      <div className="flex h-6 shrink-0 items-center justify-end bg-[#404040] pr-[3px]">
        <svg width="10" height="10" viewBox="0 0 10 10" fill="#8a8a8a">
          <Rs r={[[8, 0, 2, 2], [4, 4, 2, 2], [8, 4, 2, 2], [0, 8, 2, 2], [4, 8, 2, 2], [8, 8, 2, 2]]} />
        </svg>
      </div>
    </div>
  );
}
